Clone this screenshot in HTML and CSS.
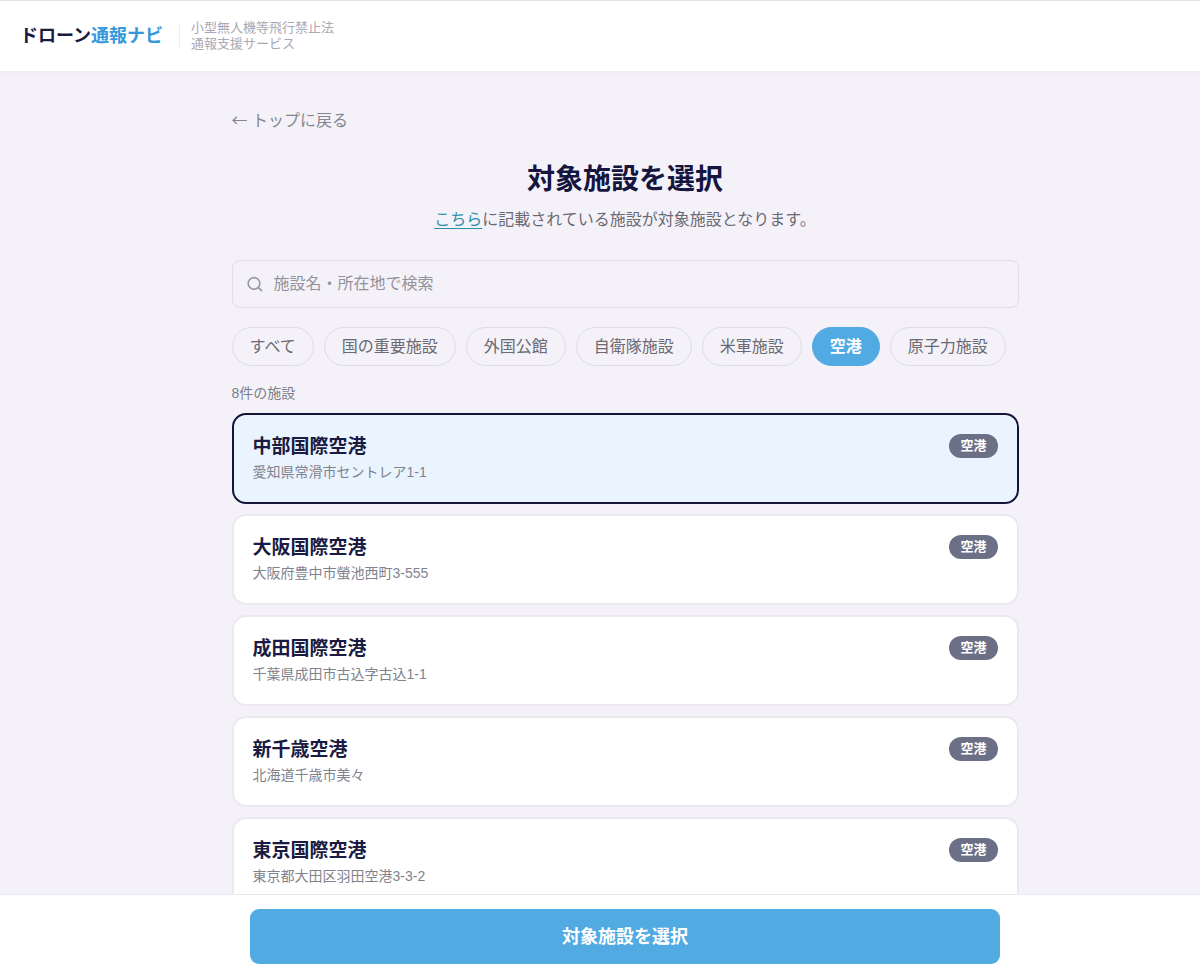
FILE: index.html
```html
<!DOCTYPE html>
<html lang="ja">
<head>
    <meta charset="UTF-8">
    <meta name="viewport" content="width=device-width, initial-scale=1.0">
    <title>対象施設を選択</title>
    <link rel="stylesheet" href="styles.css">
</head>
<body>
    <header class="header">
        <div class="logo">ドローン<span>通報ナビ</span></div>
        <div class="tagline">小型無人機等飛行禁止法<br>通報支援サービス</div>
    </header>

    <main class="main">
        <div class="container">
            <a class="back-link" href="#"><span class="arrow">←</span> トップに戻る</a>

            <h1>対象施設を選択</h1>
            <p class="lead"><a href="#">こちら</a>に記載されている施設が対象施設となります。</p>

            <label class="search">
                <svg width="16" height="16" viewBox="0 0 16 16" fill="none" stroke="#97979f" stroke-width="1.6" stroke-linecap="round" aria-hidden="true">
                    <circle cx="7" cy="7.4" r="5.8"/>
                    <path d="M11.3 11.6L14.5 14.6"/>
                </svg>
                <input type="search" placeholder="施設名・所在地で検索" aria-label="施設名・所在地で検索">
            </label>

            <div class="filters">
                <button type="button" class="chip">すべて</button>
                <button type="button" class="chip">国の重要施設</button>
                <button type="button" class="chip">外国公館</button>
                <button type="button" class="chip">自衛隊施設</button>
                <button type="button" class="chip">米軍施設</button>
                <button type="button" class="chip active">空港</button>
                <button type="button" class="chip">原子力施設</button>
            </div>

            <p class="count">8件の施設</p>

            <div class="facilities">
                <button type="button" class="card selected">
                    <span class="info">
                        <span class="name">中部国際空港</span>
                        <span class="address">愛知県常滑市セントレア1-1</span>
                    </span>
                    <span class="badge">空港</span>
                </button>
                <button type="button" class="card">
                    <span class="info">
                        <span class="name">大阪国際空港</span>
                        <span class="address">大阪府豊中市螢池西町3-555</span>
                    </span>
                    <span class="badge">空港</span>
                </button>
                <button type="button" class="card">
                    <span class="info">
                        <span class="name">成田国際空港</span>
                        <span class="address">千葉県成田市古込字古込1-1</span>
                    </span>
                    <span class="badge">空港</span>
                </button>
                <button type="button" class="card">
                    <span class="info">
                        <span class="name">新千歳空港</span>
                        <span class="address">北海道千歳市美々</span>
                    </span>
                    <span class="badge">空港</span>
                </button>
                <button type="button" class="card">
                    <span class="info">
                        <span class="name">東京国際空港</span>
                        <span class="address">東京都大田区羽田空港3-3-2</span>
                    </span>
                    <span class="badge">空港</span>
                </button>
            </div>
        </div>
    </main>

    <footer class="action-bar">
        <button type="button" class="submit">対象施設を選択</button>
    </footer>
</body>
</html>
```
FILE: styles.css
```css
* {
    margin: 0;
    padding: 0;
    box-sizing: border-box;
}

body {
    background: #f4f2f8;
    color: #6a6a74;
    font-family: "Liberation Sans", "Noto Sans CJK JP", sans-serif;
    font-size: 16px;
    line-height: 24px;
}

button,
input {
    font: inherit;
    color: inherit;
}

button {
    cursor: pointer;
}

.header {
    display: flex;
    align-items: center;
    gap: 16px;
    height: 71px;
    padding: 0 20px;
    background: #fff;
    border-top: 1px solid #e4e4e8;
    box-shadow: 0 1px 4px rgba(30, 30, 60, 0.04);
}

.logo {
    color: #1a1a3e;
    font-size: 18px;
    font-weight: 700;
}

.logo span {
    color: #3498db;
}

.tagline {
    padding-left: 12px;
    color: #aaa8b4;
    font-size: 13px;
    line-height: 16px;
    background: linear-gradient(#eeecf3, #eeecf3) left center / 1px 22px no-repeat;
}

.main {
    padding: 36px 0 50px 50px;
}

.container {
    max-width: 787px;
    margin: 0 auto;
}

.back-link {
    display: inline-block;
    color: #85858f;
    text-decoration: none;
}

.arrow {
    font-family: "Noto Sans CJK JP", sans-serif;
}

h1 {
    margin-top: 27px;
    color: #15153f;
    font-size: 28px;
    line-height: 40px;
    text-align: center;
}

.lead {
    margin: 8px 0 28px;
    text-align: center;
}

.lead a {
    color: #2f8fae;
    text-underline-offset: 3px;
}

.search {
    display: flex;
    align-items: center;
    gap: 11px;
    height: 48px;
    padding: 0 14px;
    border: 1px solid #dfdde6;
    border-radius: 8px;
}

.search input {
    flex: 1;
    min-width: 0;
    height: 46px;
    border: 0;
    outline: 0;
    background: transparent;
}

.search input::placeholder {
    color: #92929c;
    opacity: 1;
}

.filters {
    display: flex;
    flex-wrap: wrap;
    gap: 10px;
    margin-top: 19px;
}

.chip {
    height: 39px;
    padding: 0 17px;
    border: 1px solid #dddbe5;
    border-radius: 20px;
    background: transparent;
    white-space: nowrap;
}

.chip.active {
    border-color: #52aae3;
    background: #52aae3;
    color: #fff;
    font-weight: 700;
}

.count {
    margin: 17px 0 9px;
    color: #7d7d88;
    font-size: 14px;
    line-height: 21px;
}

.facilities {
    display: flex;
    flex-direction: column;
    gap: 10px;
}

.card {
    display: flex;
    justify-content: space-between;
    align-items: flex-start;
    padding: 19px;
    border: 2px solid #ebe9ef;
    border-radius: 14px;
    background: #fff;
    text-align: left;
}

.card.selected {
    border-color: #15153a;
    background: #eaf4fe;
}

.info {
    display: flex;
    flex-direction: column;
    gap: 3px;
}

.name {
    color: #1a1a42;
    font-size: 19px;
    font-weight: 700;
    line-height: 25px;
}

.address {
    color: #82828e;
    font-size: 14px;
    line-height: 21px;
}

.badge {
    padding: 0 11px;
    border-radius: 12px;
    background: #6b7086;
    color: #fff;
    font-size: 13px;
    font-weight: 700;
    line-height: 24px;
}

.action-bar {
    position: fixed;
    right: 0;
    bottom: 0;
    left: 0;
    padding: 14px 0 10px 50px;
    border-top: 1px solid #e9e7f0;
    background: #fff;
}

.submit {
    display: block;
    width: 100%;
    max-width: 750px;
    height: 55px;
    margin: 0 auto;
    border: 0;
    border-radius: 9px;
    background: #52aae3;
    color: #fff;
    font-size: 18px;
    font-weight: 700;
}
```
